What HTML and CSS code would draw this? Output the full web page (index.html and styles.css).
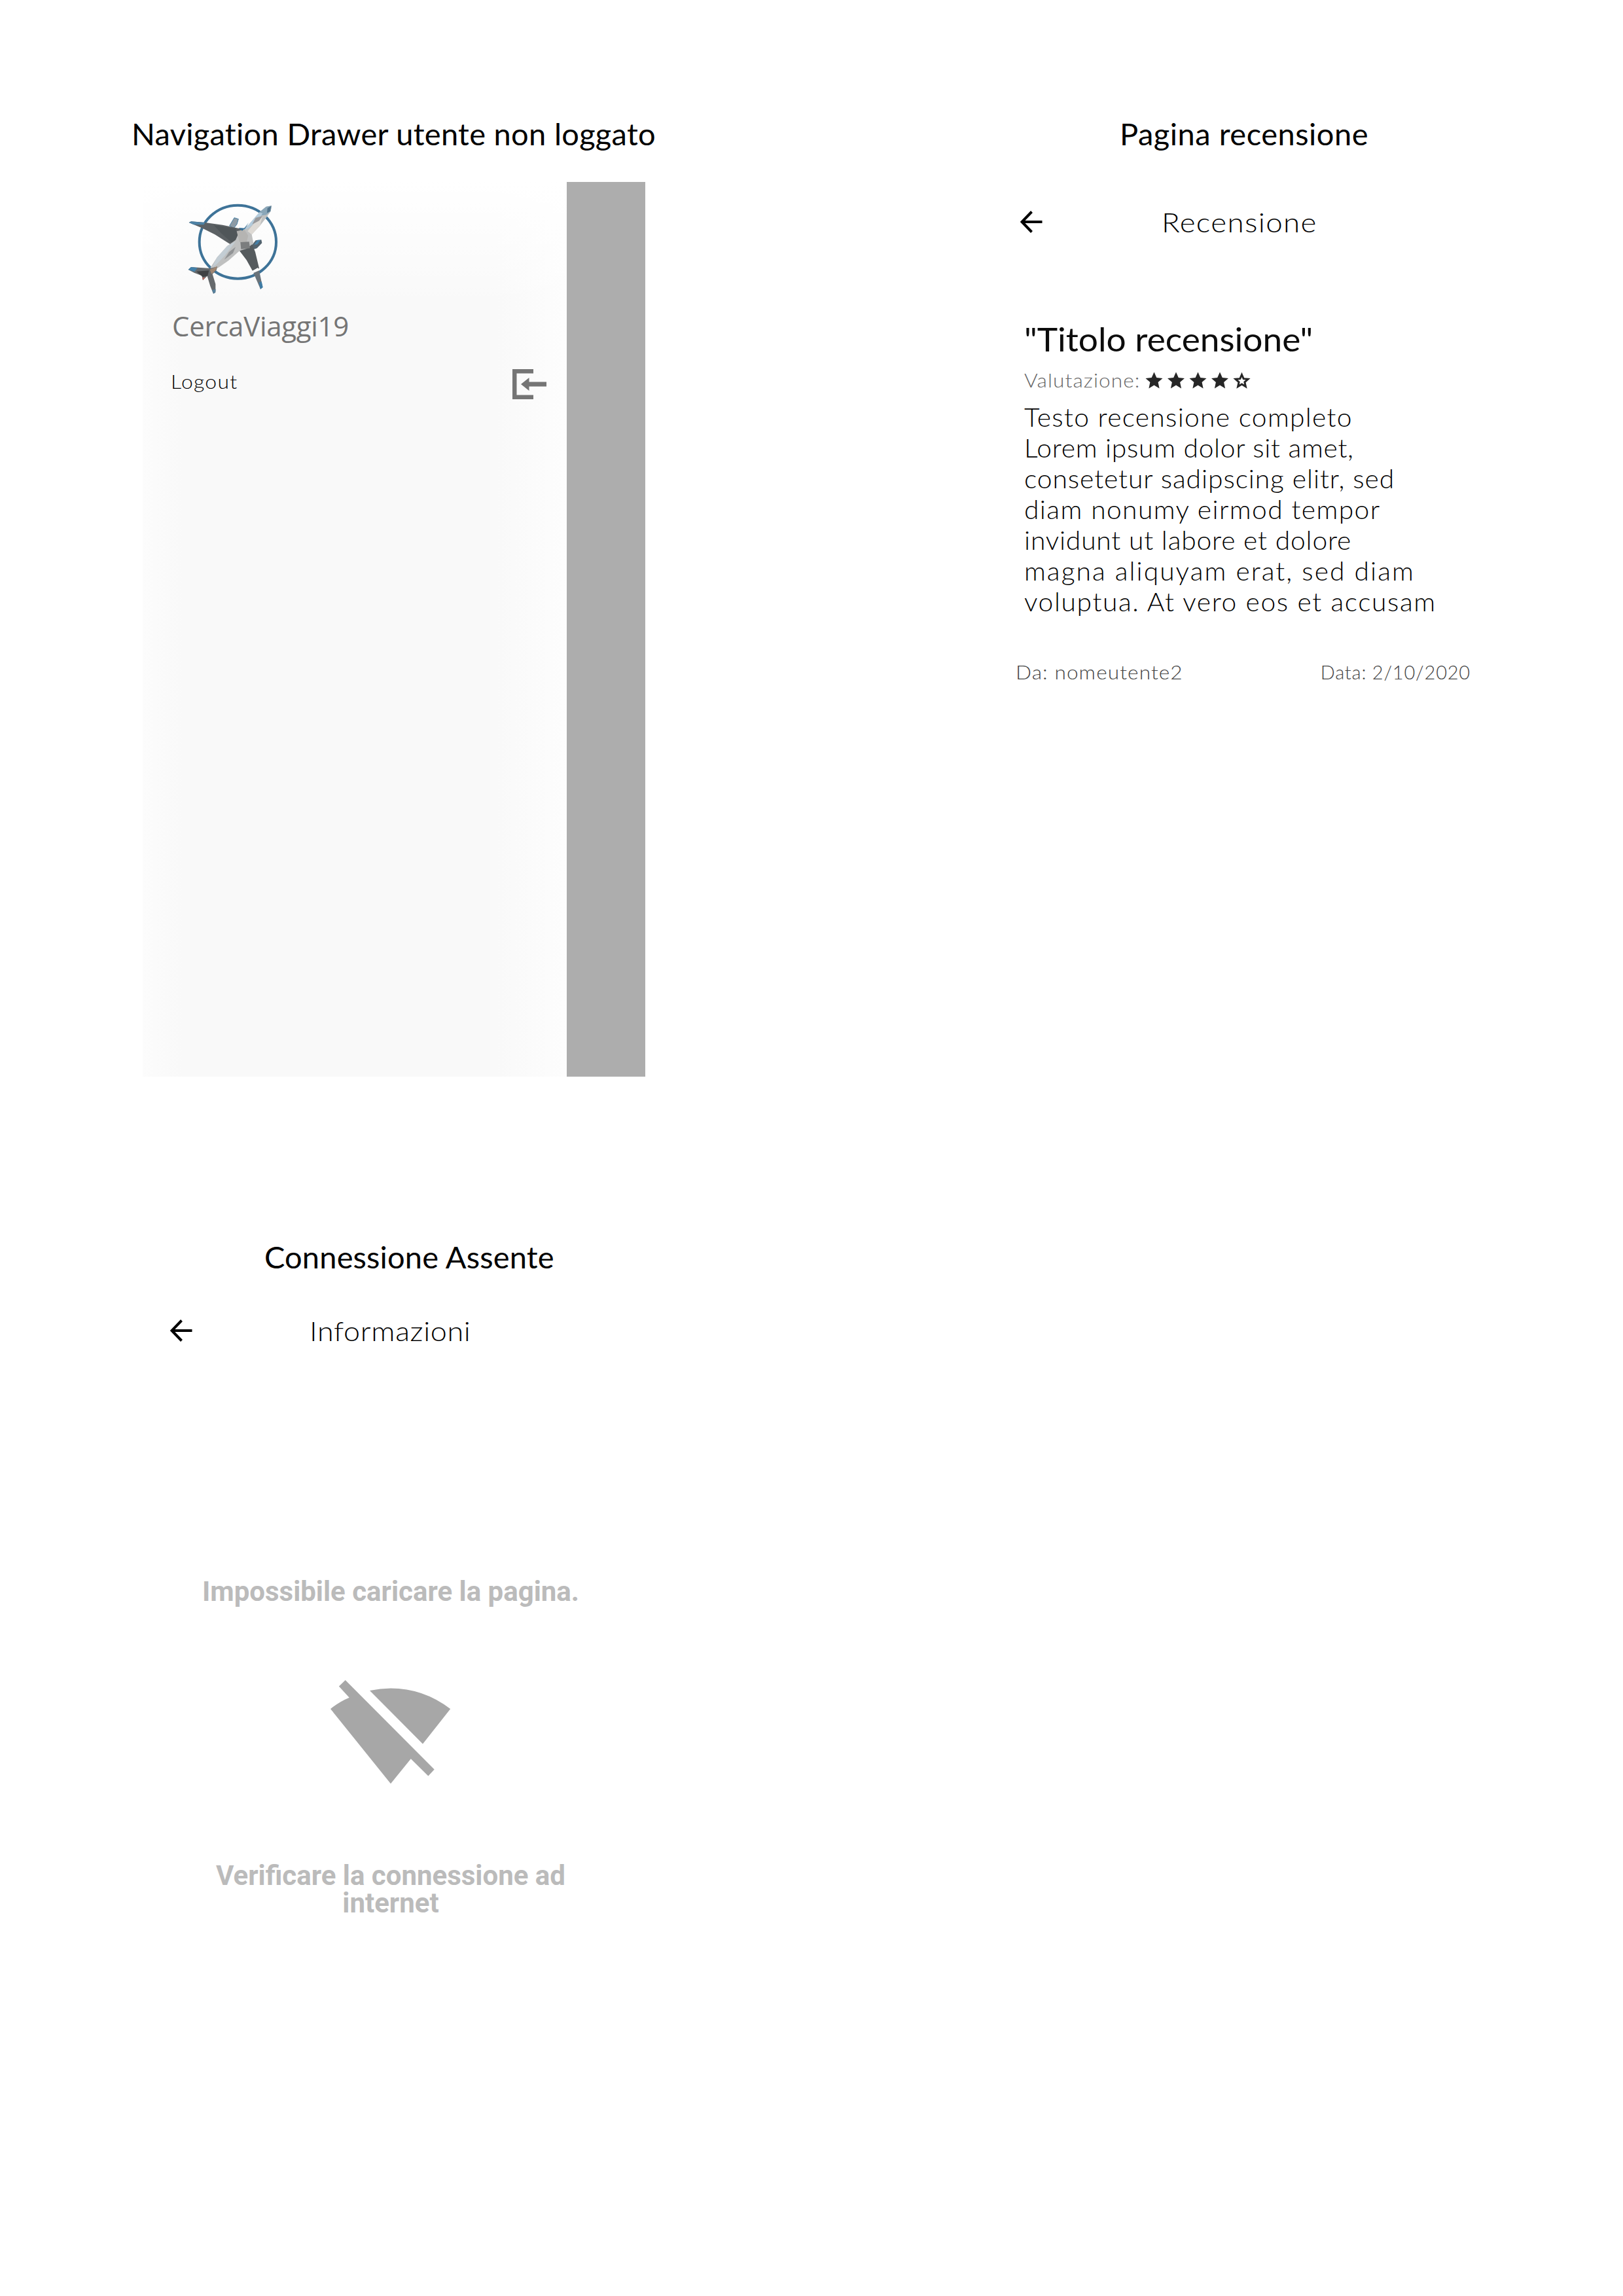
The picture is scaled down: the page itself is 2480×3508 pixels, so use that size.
FILE: index.html
```html
<!DOCTYPE html>
<html lang="it">
<head>
<meta charset="utf-8">
<title>CercaViaggi19</title>
<link rel="stylesheet" href="styles.css">
</head>
<body>
<main class="sheet">
  <div class="column column-left">
    <section class="board">
      <h2 class="caption caption-drawer">Navigation Drawer utente non loggato</h2>
      <div class="drawer">
        <div class="drawer-panel">
          <svg class="logo" viewBox="0 0 570 540" aria-hidden="true">
            <ellipse cx="310" cy="239" rx="176" ry="168" fill="none" stroke="#3e7398" stroke-width="12"/>
            <path d="M272 165 L294 128 L313 134 L306 158 L292 176Z" fill="#8d9ba5" stroke="#4b81a5" stroke-width="3"/>
            <path d="M86 150 L96 145 L160 150 L240 161 L330 180 L345 235 L300 262 L270 246 L205 205 L145 175Z" fill="#5c6164"/>
            <path d="M86 150 L96 145 L160 150 L155 160 L108 160Z" fill="#4d82a5"/>
            <path d="M200 162 L300 178 L320 230 L280 240 L235 200Z" fill="#505659"/>
            <path d="M368 262 L392 232 L418 229 L421 244 L398 268 L380 274Z" fill="#53636e"/>
            <path d="M385 252 L400 230 L414 230 L400 250Z" fill="#4580a8"/>
            <path d="M318 280 L372 240 L390 285 L408 360 L378 372 L350 322Z" fill="#565b5e"/>
            <path d="M376 372 L402 357 L407 366 L380 380Z" fill="#ffffff"/>
            <path d="M382 381 L408 370 L424 447 L414 455Z" fill="#6a737a"/>
            <path d="M407 425 L419 420 L425 447 L414 456Z" fill="#3f7ca5"/>
            <path d="M465 73 L461 98 L440 128 L412 164 L374 205 L382 245 L350 270 L318 280 L268 324 L222 356 L190 372 L185 356 L215 310 L262 257 L300 230 L318 190 L360 160 L408 104 L440 77Z" fill="#bfc0c0"/>
            <path d="M465 73 L461 98 L440 115 L408 120 L412 100 L440 77Z" fill="#8aa6b8"/>
            <path d="M446 84 L463 74 L458 99 L444 106Z" fill="#53758c"/>
            <path d="M408 104 L424 108 L402 140 L360 175 L340 184Z" fill="#b3cbdc"/>
            <path d="M424 118 L412 164 L374 205 L355 190 L392 145Z" fill="#dedad5"/>
            <path d="M392 128 L424 120 L408 142 L376 158Z" fill="#99999b"/>
            <path d="M305 190 L340 182 L358 210 L350 242 L318 240Z" fill="#b5b4b2"/>
            <path d="M322 240 L362 238 L366 268 L325 272Z" fill="#7b7d7e"/>
            <path d="M262 257 L300 237 L252 300 L215 340 L192 356 L215 310Z" fill="#c3cdd4"/>
            <path d="M270 285 L300 262 L288 290 L248 320Z" fill="#929496"/>
            <path d="M314 174 L342 176 L330 188Z" fill="#346d96"/>
            <path d="M360 150 L342 181 L336 181Z" fill="#3f7ca5"/>
            <path d="M83 366 L96 354 L185 360 L216 352 L212 368 L194 386 L208 432 L208 470 L198 476 L184 442 L170 395 L150 414 L145 394 L110 380Z" fill="#65696c"/>
            <path d="M83 366 L96 354 L125 358 L112 376Z" fill="#4381aa"/>
            <path d="M120 374 L178 370 L172 394 L150 400Z" fill="#3f4143"/>
            <path d="M182 366 L216 351 L208 370 L190 386Z" fill="#a08672"/>
            <path d="M147 402 L162 401 L150 415Z" fill="#b06a60"/>
            <path d="M192 460 L209 455 L207 471 L199 476Z" fill="#56809c"/>
          </svg>
          <div class="app-name">CercaViaggi19</div>
          <div class="drawer-item">
            <span class="wide logout-label">Logout</span>
            <svg class="logout-icon" viewBox="0 0 52 46" aria-hidden="true">
              <path d="M32 0 V6.5 H6.5 V39.5 H32 V46 H0 V0Z M13 23 L25.5 13 V19.5 H52 V26.5 H25.5 V33Z" fill="#757575"/>
            </svg>
          </div>
        </div>
        <div class="drawer-scrim"></div>
      </div>
    </section>

    <section class="board board-offline">
      <h2 class="caption caption-offline">Connessione Assente</h2>
      <header class="appbar appbar-offline">
        <svg class="back" viewBox="0 0 34 34" aria-hidden="true">
          <path d="M17.5 1.5 L2.6 17 L17.5 32.5 M3 17 H33.5" fill="none" stroke="#000" stroke-width="4"/>
        </svg>
        <span class="wide appbar-title informazioni">Informazioni</span>
      </header>
      <div class="offline">
        <p class="offline-text">Impossibile caricare la pagina.</p>
        <svg class="offline-icon" viewBox="0 0 184 159" aria-hidden="true">
          <path d="M12.9 9.6 L22.7 0 L158.7 136.6 L149.4 146.4 L122.8 120.2 L92 158.2 L0 43.9 Q13.5 33 28.7 26.7Z M60 16 Q76 12.4 92 12.4 Q142 12.4 183.2 43.9 L141 97.4Z" fill="#a7a7a7"/>
        </svg>
        <p class="offline-text">Verificare la connessione ad<br>internet</p>
      </div>
    </section>
  </div>

  <div class="column column-right">
    <section class="board">
      <h2 class="caption caption-review">Pagina recensione</h2>
      <header class="appbar appbar-review">
        <svg class="back" viewBox="0 0 34 34" aria-hidden="true">
          <path d="M17.5 1.5 L2.6 17 L17.5 32.5 M3 17 H33.5" fill="none" stroke="#000" stroke-width="4"/>
        </svg>
        <span class="wide appbar-title recensione">Recensione</span>
      </header>
      <article class="review">
        <h3 class="wide review-title">"Titolo recensione"</h3>
        <div class="rating">
          <div class="rating-label"><span class="wide small">Valutazione:</span></div>
          <svg class="stars" viewBox="0 0 161 27" aria-label="4 su 5">
            <defs>
              <path id="star" d="M13.5 0.5 L17.3 9 L26.5 9.9 L19.6 16 L21.6 25.5 L13.5 20.6 L5.4 25.5 L7.4 16 L0.5 9.9 L9.7 9Z"/>
            </defs>
            <g fill="#262626">
              <use href="#star"/>
              <use href="#star" x="33.5"/>
              <use href="#star" x="67"/>
              <use href="#star" x="100.5"/>
            </g>
            <path d="M147.5 4.5 L150.2 10.7 L157 11.3 L151.9 15.8 L153.4 22.6 L147.5 19 L141.6 22.6 L143.1 15.8 L138 11.3 L144.8 10.7Z" fill="none" stroke="#262626" stroke-width="3"/>
          </svg>
        </div>
        <p class="review-body wide">
          <span>Testo recensione completo</span>
          <span>Lorem ipsum dolor sit amet,</span>
          <span>consetetur sadipscing elitr, sed</span>
          <span>diam nonumy eirmod tempor</span>
          <span>invidunt ut labore et dolore</span>
          <span>magna aliquyam erat, sed diam</span>
          <span>voluptua. At vero eos et accusam</span>
        </p>
        <footer class="review-meta">
          <span class="wide small">Da: nomeutente2</span>
          <span class="date">Data: 2/10/2020</span>
        </footer>
      </article>
    </section>
  </div>
</main>
</body>
</html>
```
FILE: styles.css
```css
* { box-sizing: border-box; }
body {
  margin: 0;
  background: #fff;
  font-family: Lato, "Liberation Sans", sans-serif;
  color: #000;
}
h2, h3, p { margin: 0; font-weight: 400; }
svg { display: block; flex: none; }

.sheet {
  display: grid;
  grid-template-columns: 1240px 1240px;
  width: 2480px;
  height: 3508px;
  padding-top: 174px;
  white-space: nowrap;
}

.caption { font-size: 47px; line-height: 60px; }
.caption-drawer { padding-left: 201px; letter-spacing: 0.3px; }
.caption-offline { padding-left: 404px; letter-spacing: 0.15px; }
.caption-review { padding-left: 471px; letter-spacing: 0.5px; }

/* Widened letterforms for the rounder app lettering */
.wide {
  display: inline-block;
  transform: scaleX(1.08);
  transform-origin: left center;
}

/* Navigation drawer */
.drawer {
  display: flex;
  width: 768px;
  height: 1367px;
  margin: 44px 0 0 218px;
}
.drawer-panel {
  width: 648px;
  background:
    linear-gradient(to bottom, #fff 0, rgba(255, 255, 255, 0) 190px),
    linear-gradient(to right, #fcfcfc 0, #f9f9f9 60px, #f9f9f9 540px, #fdfdfd 648px);
}
.drawer-scrim { width: 120px; background: #adadad; }
.logo { width: 190px; height: 180px; margin: 12px 0 0 42px; }
.app-name {
  margin: 3px 0 0 45px;
  font-family: "Open Sans", "Noto Sans", sans-serif;
  font-size: 42px;
  line-height: 50px;
  letter-spacing: -0.3px;
  color: #757575;
}
.drawer-item {
  display: flex;
  align-items: center;
  justify-content: space-between;
  height: 60px;
  margin: 30px 31px 0 43px;
  font-size: 29px;
  font-weight: 300;
  line-height: 60px;
  color: #000;
}
.logout-label { letter-spacing: 1.2px; transform: scaleX(1.1); }
.logout-icon { width: 52px; height: 46px; margin-top: 8px; }

/* App bar */
.appbar { display: flex; align-items: center; height: 60px; }
.back { width: 34px; height: 34px; }
.appbar-title {
  font-size: 42px;
  font-weight: 300;
  line-height: 60px;
}
.appbar-review { margin: 75px 0 0 319px; }
.recensione { margin-left: 182px; letter-spacing: 1.2px; transform: scaleX(1.09); }
.appbar-offline { margin: 53px 0 0 260px; }
.informazioni { margin-left: 179px; letter-spacing: 0.6px; transform: scaleX(1.07); }

/* Offline page */
.board-offline { margin-top: 245px; }
.offline {
  display: flex;
  flex-direction: column;
  align-items: center;
  width: 600px;
  margin: 348px 0 0 297px;
}
.offline-text {
  font-family: Roboto, "Liberation Sans", sans-serif;
  font-size: 42px;
  font-weight: 700;
  line-height: 42.5px;
  text-align: center;
  color: #bbb;
}
.offline-icon { width: 184px; height: 159px; margin: 113px 0 119px; }

/* Review page */
.review { margin: 119px 0 0 325px; }
.review-title {
  font-size: 50px;
  line-height: 60px;
  transform: scaleX(1.065);
  color: #0c0c0c;
}
.rating {
  display: flex;
  align-items: center;
  height: 40px;
  margin-top: 13px;
}
.rating-label { width: 185px; color: #666; }
.small {
  font-size: 29px;
  font-weight: 300;
  line-height: 40px;
  letter-spacing: 1px;
  transform: scaleX(1.09);
}
.stars { width: 161px; height: 27px; }
.review-body {
  margin-top: 13px;
  font-size: 38.5px;
  font-weight: 300;
  line-height: 47px;
  letter-spacing: 1.2px;
  transform: scaleX(1.06);
}
.review-body span { display: block; }
.review-body span:nth-child(2) { letter-spacing: 0.65px; }
.review-body span:nth-child(3) { letter-spacing: 0.85px; }
.review-body span:nth-child(4) { letter-spacing: 1.3px; }
.review-body span:nth-child(5) { letter-spacing: 0.75px; }
.review-body span:nth-child(6) { letter-spacing: 1.9px; }
.review-body span:nth-child(7) { letter-spacing: 1.5px; }
.review-meta {
  display: flex;
  justify-content: space-between;
  width: 695px;
  margin: 64px 0 0 -13px;
  font-size: 29px;
  font-weight: 300;
  line-height: 40px;
  color: #444;
}
.date { letter-spacing: 0.8px; }
```
